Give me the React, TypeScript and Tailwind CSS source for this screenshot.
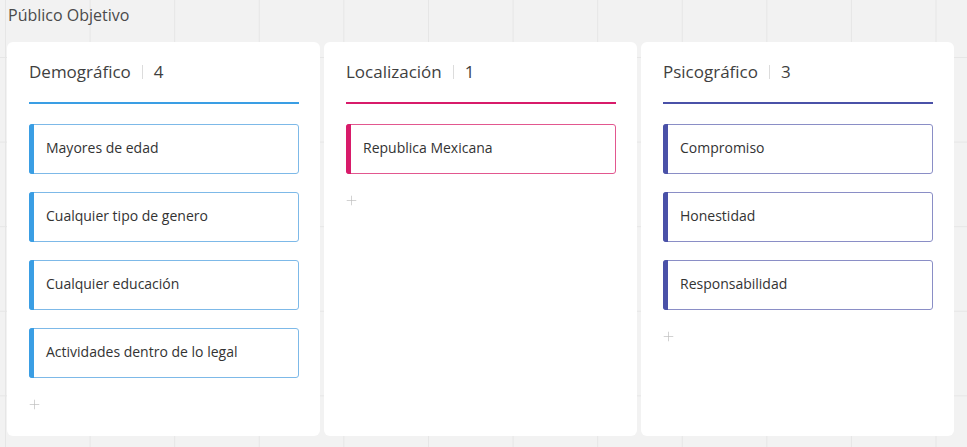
import { Plus } from 'lucide-react';

interface Column {
  title: string;
  items: string[];
  line: string;
  bar: string;
  border: string;
}

const columns: Column[] = [
  {
    title: 'Demográfico',
    items: ['Mayores de edad', 'Cualquier tipo de genero', 'Cualquier educación', 'Actividades dentro de lo legal'],
    line: 'bg-[#3a9ee4]',
    bar: 'bg-[#3a9ee4]',
    border: 'border-[#7db9e8]',
  },
  {
    title: 'Localización',
    items: ['Republica Mexicana'],
    line: 'bg-[#d81b6a]',
    bar: 'bg-[#d81b6a]',
    border: 'border-[#e2578f]',
  },
  {
    title: 'Psicográfico',
    items: ['Compromiso', 'Honestidad', 'Responsabilidad'],
    line: 'bg-[#4a51a8]',
    bar: 'bg-[#4a51a8]',
    border: 'border-[#8a8ec6]',
  },
];

function Card({ col }: { col: Column }) {
  return (
    <div className="flex-1 bg-white rounded-md pl-[22px] pr-[21px] pt-[17px]">
      <div className="flex items-center h-[26px] text-[17px] text-[#3f3f3f]">
        <span>{col.title}</span>
        <span className="mx-[11px] w-px h-[14px] bg-[#dcdcdc]" />
        <span>{col.items.length}</span>
      </div>
      <div className={`mt-[17px] h-[2px] ${col.line}`} />
      <div className="mt-[20px] flex flex-col gap-[18px]">
        {col.items.map((item) => (
          <div
            key={item}
            className={`relative h-[50px] rounded-[3px] border ${col.border} flex items-center pl-[16px] text-[14px] text-[#333]`}
          >
            <div className={`absolute -left-px -top-px -bottom-px w-[5px] rounded-l-[3px] ${col.bar}`} />
            <span className="-mt-[4px]">{item}</span>
          </div>
        ))}
      </div>
      <div className="mt-[19px] -ml-[2px] flex h-[15px] text-[#bdbdbd]">
        <Plus size={15} strokeWidth={1.1} />
      </div>
    </div>
  );
}

export default function App() {
  return (
    <div
      className="w-[967px] h-[447px] bg-[#f2f2f2] bg-[linear-gradient(to_right,#e6e6e6_1px,transparent_1px),linear-gradient(to_bottom,#e6e6e6_1px,transparent_1px)] bg-[size:84.6px_84.6px] bg-[position:5px_57px] overflow-hidden"
      style={{ fontFamily: '"Open Sans", sans-serif' }}
    >
      <div className="h-[42px] pl-[8px] pt-[3px] text-[16px] text-[#4a4a4a]">Público Objetivo</div>
      <div className="flex gap-[4px] pl-[7px] pr-[13px] h-[394px]">
        {columns.map((col) => (
          <Card key={col.title} col={col} />
        ))}
      </div>
    </div>
  );
}
